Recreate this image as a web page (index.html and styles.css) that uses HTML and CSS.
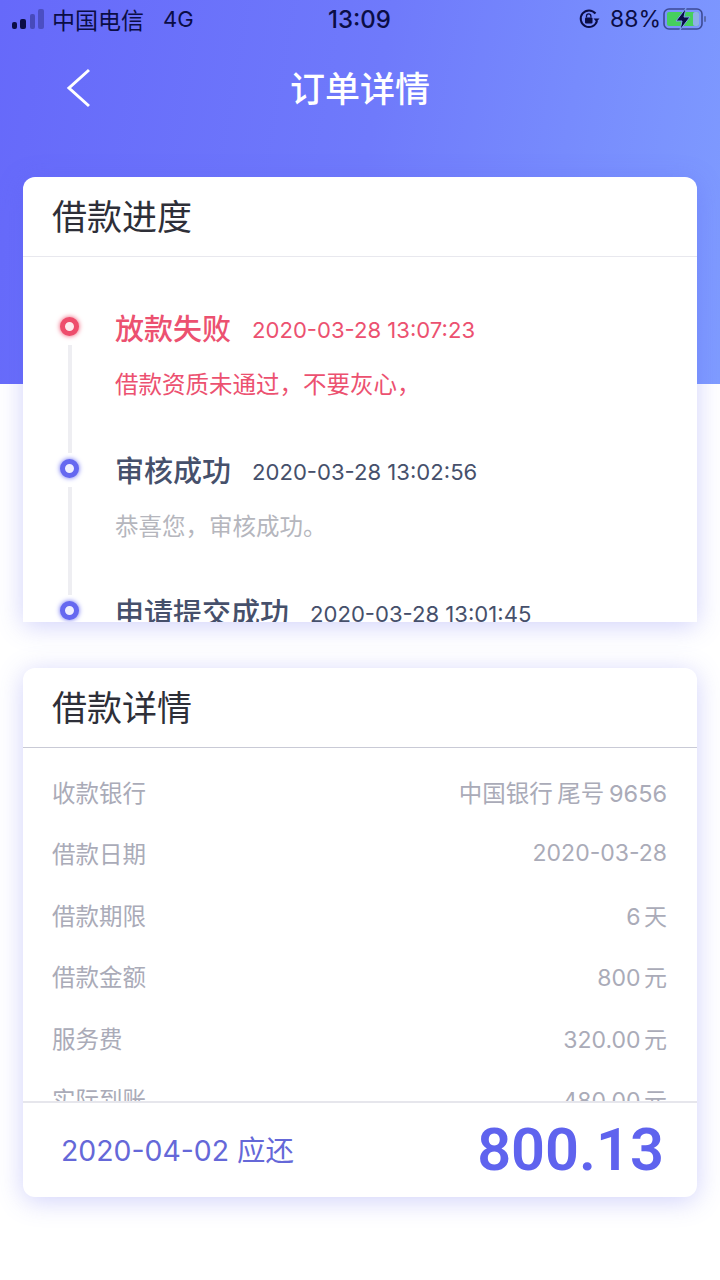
FILE: index.html
```html
<!DOCTYPE html>
<html lang="zh-CN">

<head>
    <meta charset="UTF-8" />
    <meta name="viewport" content="width=device-width, initial-scale=1.0" />
    <title>订单详情</title>
    <link rel="stylesheet" href="styles.css">
</head>

<body>
    <div class="hero">
        <div class="status-bar">
            <div class="status-left">
                <svg class="signal" width="34" height="22" viewBox="0 0 34 22">
                    <rect x="0" y="14" width="5" height="7" rx="2" fill="#0b0d45" />
                    <rect x="8" y="11" width="6" height="10" rx="2" fill="#0b0d45" />
                    <rect x="18" y="6" width="5" height="15" rx="2" fill="#0b0d45" opacity=".35" />
                    <rect x="26" y="1" width="6" height="20" rx="2" fill="#0b0d45" opacity=".3" />
                </svg>
                <span class="carrier">中国电信</span>
                <span class="network">4G</span>
            </div>
            <div class="status-time">13:09</div>
            <div class="status-right">
                <svg class="lock" width="22" height="22" viewBox="0 0 22 22">
                    <path d="M17.5 5.5A8.3 8.3 0 1 0 19 13" fill="none" stroke="#0b0d45" stroke-width="2" />
                    <path d="M15.5 10.5h6l-3 3.6z" fill="#0b0d45" />
                    <rect x="7" y="9.5" width="7.5" height="6" rx="1" fill="#0b0d45" />
                    <path d="M8.5 9.5V8a2.2 2.2 0 0 1 4.4 0v1.5" fill="none" stroke="#0b0d45" stroke-width="1.3" />
                </svg>
                <span class="percent">88%</span>
                <svg class="battery" width="44" height="24" viewBox="0 0 44 24">
                    <rect x="1" y="2" width="38" height="20" rx="5" fill="none" stroke="#3c4a94" stroke-width="1.6" />
                    <rect x="4" y="5" width="32" height="14" rx="2" fill="#46cf5d" />
                    <rect x="30" y="5" width="6" height="14" rx="2" fill="#8fb0e8" />
                    <rect x="41" y="9" width="2" height="6" rx="1" fill="#5a6bb0" />
                    <path d="M23 1 13 14h6l-2 9 10-13h-6z" fill="#0b0d45" stroke="#7aa0ee" stroke-width="1" />
                </svg>
            </div>
        </div>
        <div class="nav-bar">
            <svg class="back" width="26" height="40" viewBox="0 0 26 40">
                <path d="M23 2 3 20l20 18" fill="none" stroke="#fff" stroke-width="3" />
            </svg>
            <h1>订单详情</h1>
        </div>
    </div>

    <div class="content">
        <section class="card card-progress">
            <h2 class="card-title">借款进度</h2>
            <div class="timeline">
                <div class="step step-fail">
                    <div class="step-mark"><i class="dot"></i><i class="line"></i></div>
                    <div class="step-body">
                        <div class="step-head"><strong>放款失败</strong><span>2020-03-28 13:07:23</span></div>
                        <p>借款资质未通过，不要灰心，</p>
                    </div>
                </div>
                <div class="step">
                    <div class="step-mark"><i class="dot"></i><i class="line"></i></div>
                    <div class="step-body">
                        <div class="step-head"><strong>审核成功</strong><span>2020-03-28 13:02:56</span></div>
                        <p>恭喜您，审核成功。</p>
                    </div>
                </div>
                <div class="step">
                    <div class="step-mark"><i class="dot"></i><i class="line"></i></div>
                    <div class="step-body">
                        <div class="step-head"><strong>申请提交成功</strong><span>2020-03-28 13:01:45</span></div>
                    </div>
                </div>
            </div>
        </section>

        <section class="card card-detail">
            <h2 class="card-title">借款详情</h2>
            <div class="detail-list">
                <div class="detail-row"><span>收款银行</span><span class="bank">中国银行 尾号 9656</span></div>
                <div class="detail-row"><span>借款日期</span><span class="value">2020-03-28</span></div>
                <div class="detail-row"><span>借款期限</span><span class="value">6 天</span></div>
                <div class="detail-row"><span>借款金额</span><span class="value">800 元</span></div>
                <div class="detail-row"><span>服务费</span><span class="value">320.00 元</span></div>
                <div class="detail-row"><span>实际到账</span><span class="value">480.00 元</span></div>
            </div>
            <div class="repay">
                <span class="repay-date">2020-04-02 应还</span>
                <span class="repay-amount">800.13</span>
            </div>
        </section>
    </div>
</body>

</html>
```

FILE: styles.css
```css
* {
    box-sizing: border-box;
}

body {
    margin: 0;
    height: 1280px;
    overflow: hidden;
    background: #fff;
    font-family: Inter, "Noto Sans CJK SC", sans-serif;
}

.hero {
    height: 384px;
    background: linear-gradient(100deg, #6669fa 0%, #6f7afb 50%, #7f9cff 100%);
}

.status-bar {
    height: 38px;
    padding: 0 13px 0 12px;
    display: flex;
    align-items: center;
    justify-content: space-between;
    color: #0b0d45;
    font-size: 23px;
}

.status-left {
    width: 260px;
    display: flex;
    align-items: center;
}

.signal {
    margin-right: 6px;
}

.network {
    margin-left: 19px;
    font-size: 22px;
}

.status-time {
    font-size: 24px;
    font-weight: 500;
}

.status-right {
    width: 260px;
    display: flex;
    align-items: center;
    justify-content: flex-end;
    gap: 9px;
}

.percent {
    font-size: 23px;
    margin-right: -2px;
}

.lock {
    margin-right: 1px;
}

.battery {
    margin-left: -5px;
}

.nav-bar {
    height: 96px;
    position: relative;
    display: flex;
    align-items: center;
    justify-content: center;
}

.back {
    position: absolute;
    left: 66px;
    top: 30px;
}

.nav-bar h1 {
    margin: 0;
    color: #fff;
    font-size: 35px;
    font-weight: 500;
}

.content {
    margin-top: -207px;
    padding: 0 23px;
    display: flex;
    flex-direction: column;
    gap: 46px;
}

.card {
    background: #fff;
    overflow: hidden;
    box-shadow: 0 4px 26px rgba(90, 95, 240, .28);
}

.card-progress {
    height: 445px;
    border-radius: 12px 12px 0 0;
}

.card-detail {
    height: 529px;
    border-radius: 12px;
    display: flex;
    flex-direction: column;
}

.card-title {
    margin: 0;
    height: 80px;
    flex: none;
    padding: 0 29px;
    line-height: 80px;
    font-size: 35px;
    font-weight: 400;
    color: #2e2f38;
    border-bottom: 1px solid #e8e8ee;
}

.card-detail .card-title {
    border-bottom-color: #c9cad6;
}

.timeline {
    padding-top: 45px;
}

.step {
    height: 142px;
    display: flex;
}

.step-mark {
    width: 92px;
    flex: none;
    display: flex;
    flex-direction: column;
    align-items: center;
    padding-left: 1px;
}

.dot {
    flex: none;
    width: 19px;
    height: 19px;
    margin-top: 15px;
    border-radius: 50%;
    border: 5px solid #6568f0;
    background: #eeeeff;
    box-shadow: 0 0 5px #6568f0;
}

.line {
    flex: none;
    width: 4px;
    height: 108px;
    margin: 9px 0 0;
    background: #eeeef2;
}

.step-fail .dot {
    border-color: #ee4d6c;
    background: #fdeaee;
    box-shadow: 0 0 5px #ee4d6c;
}

.step-head {
    height: 50px;
    display: flex;
    align-items: center;
    gap: 21px;
    color: #46506b;
}

.step-head strong {
    font-size: 29px;
    font-weight: 500;
}

.step-head span {
    font-size: 22.1px;
    margin-top: 5px;
}

.step p {
    margin: 17px 0 0;
    font-size: 23.5px;
    line-height: 32px;
    color: #b5b6bd;
}

.step-fail .step-head,
.step-fail p {
    color: #ec5170;
}

.detail-list {
    flex: 1;
    min-height: 0;
    overflow: hidden;
    padding: 13px 30px 0 29px;
}

.detail-row {
    height: 61.5px;
    display: flex;
    align-items: center;
    justify-content: space-between;
    font-size: 23.5px;
    color: #aaabb8;
}

.bank {
    word-spacing: -2px;
}

.value {
    font-size: 23px;
    word-spacing: -3px;
}

.repay {
    height: 96px;
    flex: none;
    padding: 0 33px 0 38px;
    display: flex;
    align-items: center;
    justify-content: space-between;
    border-top: 2px solid #e6e6ec;
}

.repay-date {
    font-size: 28.4px;
    margin-top: -3px;
    color: #6568d8;
}

.repay-amount {
    font-family: Roboto, sans-serif;
    font-size: 59.5px;
    font-weight: 600;
    color: #5f63ee;
}
```
